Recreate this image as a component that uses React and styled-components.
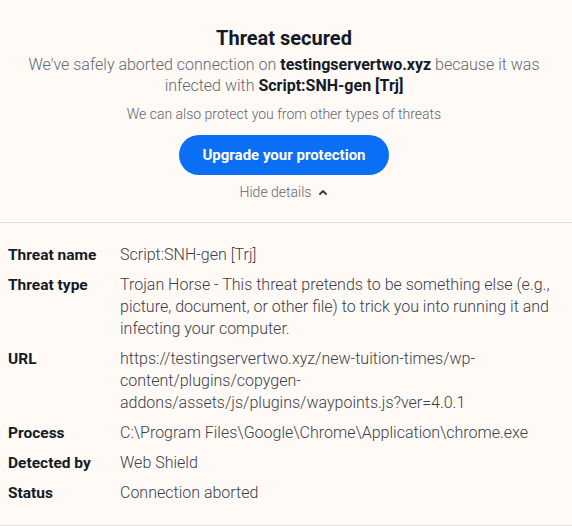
import styled, { createGlobalStyle } from "styled-components";
import { Fragment } from "react";

const Global = createGlobalStyle`
  html, body {
    margin: 0;
    padding: 0;
    background: #fffaf6;
  }
  body {
    font-family: Roboto, "Liberation Sans", sans-serif;
    -webkit-font-smoothing: antialiased;
  }
`;

const Page = styled.div`
  width: 572px;
  height: 526px;
  display: flex;
  flex-direction: column;
  background: #fffaf6;
`;

const Hero = styled.section`
  display: flex;
  flex-direction: column;
  align-items: center;
  padding: 26px 28px 0 24px;
  height: 196px;
  border-bottom: 1px solid #e6e2dd;
`;

const Title = styled.h1`
  margin: 0;
  font-size: 20px;
  line-height: 24px;
  font-weight: 700;
  color: #131a28;
`;

const Lead = styled.p`
  margin: 4px 0 0;
  text-align: center;
  font-size: 16px;
  line-height: 21px;
  font-weight: 300;
  color: #626773;
  b {
    font-weight: 700;
    color: #131a28;
  }
`;

const Note = styled.p`
  margin: 9px 0 0;
  font-size: 14px;
  line-height: 18px;
  font-weight: 300;
  color: #626773;
`;

const UpgradeButton = styled.button`
  margin-top: 12px;
  width: 210px;
  height: 40px;
  border: none;
  border-radius: 20px;
  background: #0a6ff5;
  color: #fff;
  font-family: inherit;
  font-size: 15px;
  font-weight: 700;
  cursor: pointer;
`;

const Toggle = styled.button`
  margin-top: 9px;
  display: flex;
  align-items: center;
  gap: 7px;
  border: none;
  background: none;
  padding: 0;
  font-family: inherit;
  font-size: 14px;
  font-weight: 300;
  color: #626773;
  cursor: pointer;
  svg {
    width: 10px;
    height: 10px;
  }
`;

const Details = styled.dl`
  margin: 0;
  padding: 21px 8px 0;
  flex: 1;
  display: grid;
  grid-template-columns: 112px 1fr;
  row-gap: 8px;
  align-content: start;
  border-bottom: 1px solid #e6e2dd;
`;

const Label = styled.dt`
  font-size: 15.5px;
  line-height: 22px;
  font-weight: 700;
  color: #131a28;
`;

const Value = styled.dd`
  margin: 0;
  font-size: 16px;
  line-height: 22px;
  font-weight: 300;
  color: #3a404c;
`;

const rows = [
  ["Threat name", "Script:SNH-gen [Trj]"],
  [
    "Threat type",
    "Trojan Horse - This threat pretends to be something else (e.g., picture, document, or other file) to trick you into running it and infecting your computer.",
  ],
  [
    "URL",
    "https://testingservertwo.xyz/new-tuition-times/wp-content/plugins/copygen-addons/assets/js/plugins/waypoints.js?ver=4.0.1",
  ],
  ["Process", "C:\\Program Files\\Google\\Chrome\\Application\\chrome.exe"],
  ["Detected by", "Web Shield"],
  ["Status", "Connection aborted"],
];

const App = () => {
  return (
    <>
      <Global />
      <Page>
        <Hero>
          <Title>Threat secured</Title>
          <Lead>
            We've safely aborted connection on <b>testingservertwo.xyz</b> because it was
            <br />
            infected with <b>Script:SNH-gen [Trj]</b>
          </Lead>
          <Note>We can also protect you from other types of threats</Note>
          <UpgradeButton>Upgrade your protection</UpgradeButton>
          <Toggle>
            Hide details
            <svg viewBox="0 0 10 10" fill="none" stroke="#3d4350" strokeWidth="2" strokeLinecap="round" strokeLinejoin="round">
              <path d="M2 7 L5 4 L8 7" />
            </svg>
          </Toggle>
        </Hero>
        <Details>
          {rows.map(([label, value]) => (
            <Fragment key={label}>
              <Label>{label}</Label>
              <Value>{value}</Value>
            </Fragment>
          ))}
        </Details>
      </Page>
    </>
  );
};

export default App;
